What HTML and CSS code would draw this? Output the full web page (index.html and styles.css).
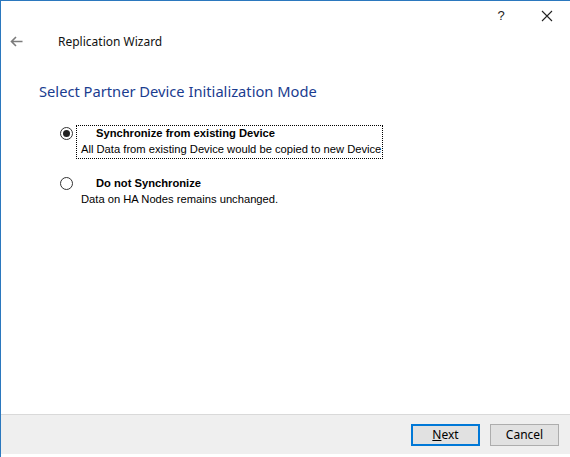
FILE: index.html
```html
<!DOCTYPE html>
<html lang="en">
<head>
  <meta charset="UTF-8" />
  <title>Replication Wizard</title>
  <link rel="stylesheet" href="styles.css">
</head>
<body>
  <div class="window">
    <div class="titlebar">
      <span class="cap-btn help">?</span>
      <span class="cap-btn close">
        <svg width="12" height="12" viewBox="0 0 12 12"><path d="M1 1 L11 11 M11 1 L1 11" stroke="#222" stroke-width="1.1" fill="none"/></svg>
      </span>
    </div>
    <div class="header">
      <svg class="back" width="13" height="11" viewBox="0 0 13 11"><path d="M12.5 5.5 H1.5 M6 1 L1.5 5.5 L6 10" stroke="#7b7b7b" stroke-width="1.6" fill="none"/></svg>
      <span class="wiz-title">Replication Wizard</span>
    </div>
    <h1 class="page-title">Select Partner Device Initialization Mode</h1>

    <div class="content">
      <div class="option">
        <span class="radio checked"></span>
        <div class="opt-text focused">
          <div class="opt-label">Synchronize from existing Device</div>
          <div class="opt-desc">All Data from existing Device would be copied to new Device</div>
        </div>
      </div>
      <div class="option">
        <span class="radio"></span>
        <div class="opt-text">
          <div class="opt-label">Do not Synchronize</div>
          <div class="opt-desc">Data on HA Nodes remains unchanged.</div>
        </div>
      </div>
    </div>

    <div class="footer">
      <button class="btn default"><u>N</u>ext</button>
      <button class="btn">Cancel</button>
    </div>
  </div>
</body>
</html>
```

FILE: styles.css
```css
body { margin: 0; background: #fff; font-family: "Noto Sans", "Open Sans", sans-serif; }
.window {
  width: 569px; height: 456px;
  border-left: 1px solid #2b78be; border-top: 1px solid #2b78be;
  display: flex; flex-direction: column;
  background: #fff;
}
.titlebar { height: 29px; display: flex; justify-content: flex-end; }
.cap-btn {
  width: 46px; display: flex; align-items: center; justify-content: center;
  font-size: 13px; color: #222;
}
.help { font-family: "Liberation Sans", sans-serif; font-size: 13px; padding-left: 8px; }
.header { height: 23px; display: flex; align-items: center; font-size: 12px; color: #111; }
.back { margin-left: 9px; margin-right: 35px; }
.page-title {
  margin: 28px 0 0 38px;
  font-size: 14.7px; font-weight: normal; color: #1a3c8f;
}
.content { flex: 1; padding: 25px 0 0 59px; font-family: "Liberation Sans", Arial, sans-serif; font-size: 11.2px; color: #000; }
.option { display: flex; align-items: flex-start; margin-bottom: 17px; }
.radio {
  width: 11px; height: 11px; border: 1px solid #333; border-radius: 50%;
  margin-top: 1px; margin-right: 3px; flex-shrink: 0;
  display: flex; align-items: center; justify-content: center; background: #fff;
}
.radio.checked::after { content: ""; width: 7px; height: 7px; border-radius: 50%; background: #222; }
.opt-text { padding: 0 1px 1px 4px; border: 1px dotted transparent; margin-top: -1px; }
.opt-text.focused { border-color: #000; }
.opt-label { font-weight: bold; padding-left: 15px; line-height: 15px; }
.opt-desc { line-height: 16px; }
.footer {
  height: 39px; margin-bottom: 3px;
  border-top: 1px solid #d9d9d9; background: #efefef;
  display: flex; justify-content: flex-end; align-items: center; gap: 10px;
  padding-right: 11px;
}
.btn {
  width: 69px; height: 22px; padding: 0;
  background: #e1e1e1; border: 1px solid #adadad;
  font-family: "Noto Sans", "Open Sans", sans-serif; font-size: 12px; color: #000;
}
.btn.default { border: 2px solid #0078d7; }
```
